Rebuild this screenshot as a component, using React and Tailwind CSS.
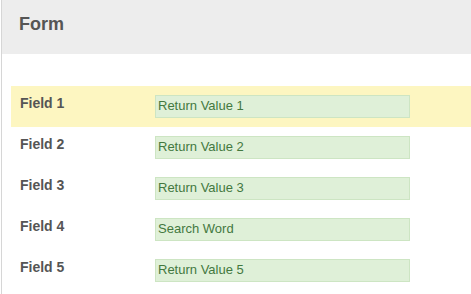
const fields = [
  { label: "Field 1", value: "Return Value 1", active: true },
  { label: "Field 2", value: "Return Value 2" },
  { label: "Field 3", value: "Return Value 3" },
  { label: "Field 4", value: "Search Word" },
  { label: "Field 5", value: "Return Value 5" },
];

function FieldRow({ label, value, active }) {
  return (
    <div
      className={
        "flex items-start h-[41px] pt-[9px] pl-[9px] " +
        (active ? "bg-[#fdf6c1]" : "")
      }
    >
      <div className="w-[135px] text-[14px] leading-[16px] font-bold text-[#555555]">
        {label}
      </div>
      <div className="w-[255px] h-[23px] border border-[#cde5c3] bg-[#dff0d8] pl-[2px] text-[13px] leading-[20px] text-[#43783f]">
        {value}
      </div>
    </div>
  );
}

export default function App() {
  return (
    <div
      className="min-h-screen ml-px border-l border-[#d6d6d6] bg-white"
      style={{ fontFamily: '"Liberation Sans", Arial, sans-serif' }}
    >
      <div className="h-[54px] bg-[#ededed] pl-[17px] pt-[14px]">
        <h1 className="text-[18px] leading-[20px] font-bold text-[#555555]">Form</h1>
      </div>
      <form className="mt-[32px] ml-[9px]">
        {fields.map((f) => (
          <FieldRow key={f.label} {...f} />
        ))}
      </form>
    </div>
  );
}
